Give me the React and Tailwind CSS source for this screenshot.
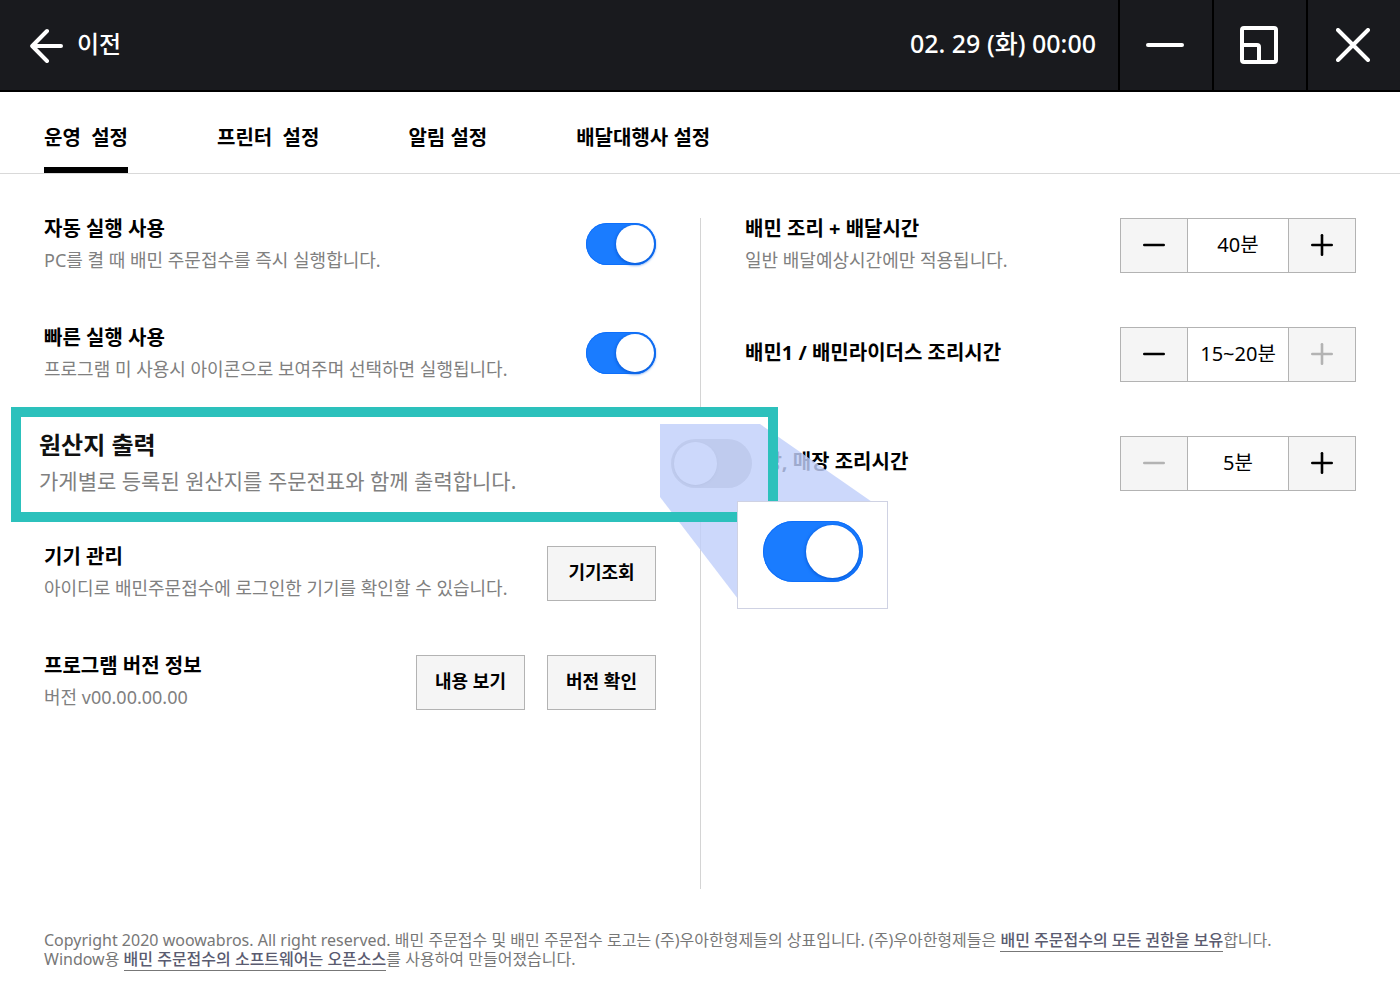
import React, { useState } from 'react'

const TABS = ['운영  설정', '프린터  설정', '알림 설정', '배달대행사 설정']

const TOGGLE_BASE =
  "block shrink-0 appearance-none rounded-full cursor-pointer before:block before:rounded-full before:content-['']"

const TOGGLE_SIZES = {
  md: 'mb-[3px] w-[70px] h-[42px] p-[2px] before:w-[38px] before:h-[38px] checked:before:ml-[28px]',
  lg: 'mb-[2px] w-[81px] h-[49px] p-[3px] before:w-[43px] before:h-[43px] checked:before:ml-[32px]',
  xl: 'w-[100px] h-[61px] p-[4px] before:w-[53px] before:h-[53px] checked:before:ml-[39px]',
}

function Toggle({ id, size = 'md', checked, onChange, label }) {
  const color = checked
    ? 'bg-[#1a7cff] inset-ring-1 inset-ring-[#0f70fa] before:bg-white before:shadow-[0_1px_3px_1px_#0a60e0]'
    : 'bg-[#b4b4b4] before:bg-white before:shadow-[0_1px_2px_#909090]'
  return (
    <input
      id={id}
      type="checkbox"
      role="switch"
      aria-label={label}
      checked={checked}
      onChange={e => onChange(e.target.checked)}
      className={`${TOGGLE_BASE} ${TOGGLE_SIZES[size]} ${color}`}
    />
  )
}

function Row({ title, desc, htmlFor, children }) {
  return (
    <div className="flex h-[55px] items-center justify-between gap-4">
      <div className="pb-[3px] whitespace-nowrap">
        <label htmlFor={htmlFor} className="block text-[20px] leading-8 font-bold text-black">{title}</label>
        {desc && <p className="text-[18px] leading-[31px] font-normal text-[#808080]">{desc}</p>}
      </div>
      {children}
    </div>
  )
}

function BoxButton({ children }) {
  return (
    <button type="button" className="h-[55px] w-[109px] border border-[#b3b3b3] bg-[#f5f5f5] pb-[2px] text-[18px] font-bold text-black">
      {children}
    </button>
  )
}

function StepIcon({ plus }) {
  return (
    <svg width="22" height="22" viewBox="0 0 22 22" fill="none" stroke="currentColor" strokeWidth="2.6" strokeLinecap="round">
      <path d="M1.3 11H20.7" />
      {plus && <path d="M11 1.3V20.7" />}
    </svg>
  )
}

function Stepper({ id, value, canMinus = true, canPlus = true }) {
  const btn = 'flex w-[66px] items-center justify-center bg-[#f5f5f5] pb-px text-black disabled:text-[#b3b3b3]'
  return (
    <div className="flex h-[55px] shrink-0 border border-[#b3b3b3]">
      <button type="button" aria-label="줄이기" disabled={!canMinus} className={btn}><StepIcon /></button>
      <input
        id={id}
        readOnly
        defaultValue={value}
        className="w-[102px] border-x border-[#b3b3b3] bg-white pb-[2px] text-center text-[20px] text-black outline-none"
      />
      <button type="button" aria-label="늘리기" disabled={!canPlus} className={btn}><StepIcon plus /></button>
    </div>
  )
}

// magnified row, the beam and the zoomed switch lie over the settings list
function OriginCallout({ off, setOff, on, setOn }) {
  return (
    <div className="absolute -top-[29px] -right-[122px] -left-[33px] z-10 h-[115px] bg-white">
      <div className="flex h-full items-center justify-between pr-[26px] pl-7">
        <div className="pb-[3px] whitespace-nowrap">
          <label htmlFor="origin" className="block text-[24px] leading-9 font-bold text-[#111]">원산지 출력</label>
          <p className="text-[21px] leading-9 font-normal text-[#808080]">가게별로 등록된 원산지를 주문전표와 함께 출력합니다.</p>
        </div>
        <Toggle id="origin" size="lg" checked={off} onChange={setOff} />
      </div>
      <svg className="pointer-events-none absolute top-[17px] -right-[110px]" width="228" height="176" viewBox="0 0 228 176">
        <path d="M0 0H100L228 89L78 175L0 73Z" fill="#c1d0fa" fillOpacity="0.82" />
      </svg>
      <div className="pointer-events-none absolute inset-0 border-[10px] border-[#2cc1bc]" />
      <div className="absolute top-[94px] -right-[110px] flex h-[108px] w-[151px] items-center justify-center border border-[#cfd2e3] bg-white pb-2">
        <Toggle size="xl" checked={on} onChange={setOn} label="원산지 출력 켜기" />
      </div>
    </div>
  )
}

function TitleBar() {
  const cell = 'flex w-[94px] items-center justify-center border-l-2 border-black pr-[3px] text-white'
  return (
    <header className="flex h-[92px] border-b-2 border-black bg-[#191a1e] text-white">
      <button type="button" className="flex items-center gap-[13px] pl-[29px] text-[24px] font-medium">
        <svg width="35" height="35" viewBox="0 0 35 35" fill="none" stroke="currentColor" strokeWidth="4" strokeLinecap="round" strokeLinejoin="round">
          <path d="M18 3L3.200 18L18 33M4 18H32" />
        </svg>
        <span className="pb-[2px]">이전</span>
      </button>
      <time className="ml-auto self-center pr-[22px] pb-[2px] text-[25px] font-medium whitespace-nowrap">02. 29 (화) 00:00</time>
      <button type="button" aria-label="최소화" className={cell}>
        <svg width="38" height="38" viewBox="0 0 38 38" stroke="currentColor" strokeWidth="4" strokeLinecap="round">
          <path d="M2 19H36" />
        </svg>
      </button>
      <button type="button" aria-label="창 크기 조절" className={cell}>
        <svg width="38" height="38" viewBox="0 0 38 38" fill="none" stroke="currentColor" strokeWidth="4" strokeLinejoin="round">
          <rect x="2" y="2" width="34" height="34" rx="2" />
          <path d="M2 19H17A2 2 0 0 1 19 21V36" />
        </svg>
      </button>
      <button type="button" aria-label="닫기" className={cell}>
        <svg width="34" height="34" viewBox="0 0 34 34" stroke="currentColor" strokeWidth="4" strokeLinecap="round">
          <path d="M2 2L32 32M32 2L2 32" />
        </svg>
      </button>
    </header>
  )
}

export default function App() {
  const [tab, setTab] = useState(0)
  const [autoRun, setAutoRun] = useState(true)
  const [quickRun, setQuickRun] = useState(true)
  const [origin, setOrigin] = useState(false)
  const [originZoom, setOriginZoom] = useState(true)

  return (
    <div className="flex min-h-screen flex-col overflow-x-hidden bg-white font-['Noto_Sans','Noto_Sans_CJK_KR',sans-serif]">
      <TitleBar />

      <nav className="flex h-[82px] gap-[89px] border-b border-[#d9d9d9] pl-11">
        {TABS.map((name, i) => (
          <button
            key={name}
            type="button"
            onClick={() => setTab(i)}
            className={`border-b-[6px] pt-4 text-[20px] font-bold whitespace-pre text-black ${i === tab ? 'border-black' : 'border-transparent'}`}
          >
            {name}
          </button>
        ))}
      </nav>

      <main className="grid flex-1 grid-cols-2 pt-11">
        <section className="flex flex-col gap-[54px] px-11">
          <Row title="자동 실행 사용" desc="PC를 켤 때 배민 주문접수를 즉시 실행합니다." htmlFor="auto">
            <Toggle id="auto" checked={autoRun} onChange={setAutoRun} />
          </Row>
          <Row title="빠른 실행 사용" desc="프로그램 미 사용시 아이콘으로 보여주며 선택하면 실행됩니다." htmlFor="quick">
            <Toggle id="quick" checked={quickRun} onChange={setQuickRun} />
          </Row>
          <div className="relative h-14">
            <OriginCallout off={origin} setOff={setOrigin} on={originZoom} setOn={setOriginZoom} />
          </div>
          <Row title="기기 관리" desc="아이디로 배민주문접수에 로그인한 기기를 확인할 수 있습니다.">
            <BoxButton>기기조회</BoxButton>
          </Row>
          <Row title="프로그램 버전 정보" desc="버전 v00.00.00.00">
            <div className="flex gap-[22px]">
              <BoxButton>내용 보기</BoxButton>
              <BoxButton>버전 확인</BoxButton>
            </div>
          </Row>
        </section>

        <section className="flex flex-col gap-[54px] border-l border-[#d4d4d4] px-11">
          <Row title="배민 조리 + 배달시간" desc="일반 배달예상시간에만 적용됩니다." htmlFor="cook">
            <Stepper id="cook" value="40분" />
          </Row>
          <Row title="배민1 / 배민라이더스 조리시간" htmlFor="riders">
            <Stepper id="riders" value="15~20분" canPlus={false} />
          </Row>
          <Row title="포장, 매장 조리시간" htmlFor="takeout">
            <Stepper id="takeout" value="5분" canMinus={false} />
          </Row>
        </section>
      </main>

      <footer className="px-11 pt-[42px] pb-6 text-[16px] leading-[19px] font-normal text-[#777]">
        <p>
          Copyright 2020 woowabros. All right reserved. 배민 주문접수 및 배민 주문접수 로고는 (주)우아한형제들의 상표입니다. (주)우아한형제들은{' '}
          <a href="#rights" className="border-b border-[#777] font-medium text-[#5a5b70]">배민 주문접수의 모든 권한을 보유</a>합니다.
        </p>
        <p>
          Window용 <a href="#opensource" className="border-b border-[#777] font-medium text-[#5a5b70]">배민 주문접수의 소프트웨어는 오픈소스</a>를 사용하여 만들어졌습니다.
        </p>
      </footer>
    </div>
  )
}
